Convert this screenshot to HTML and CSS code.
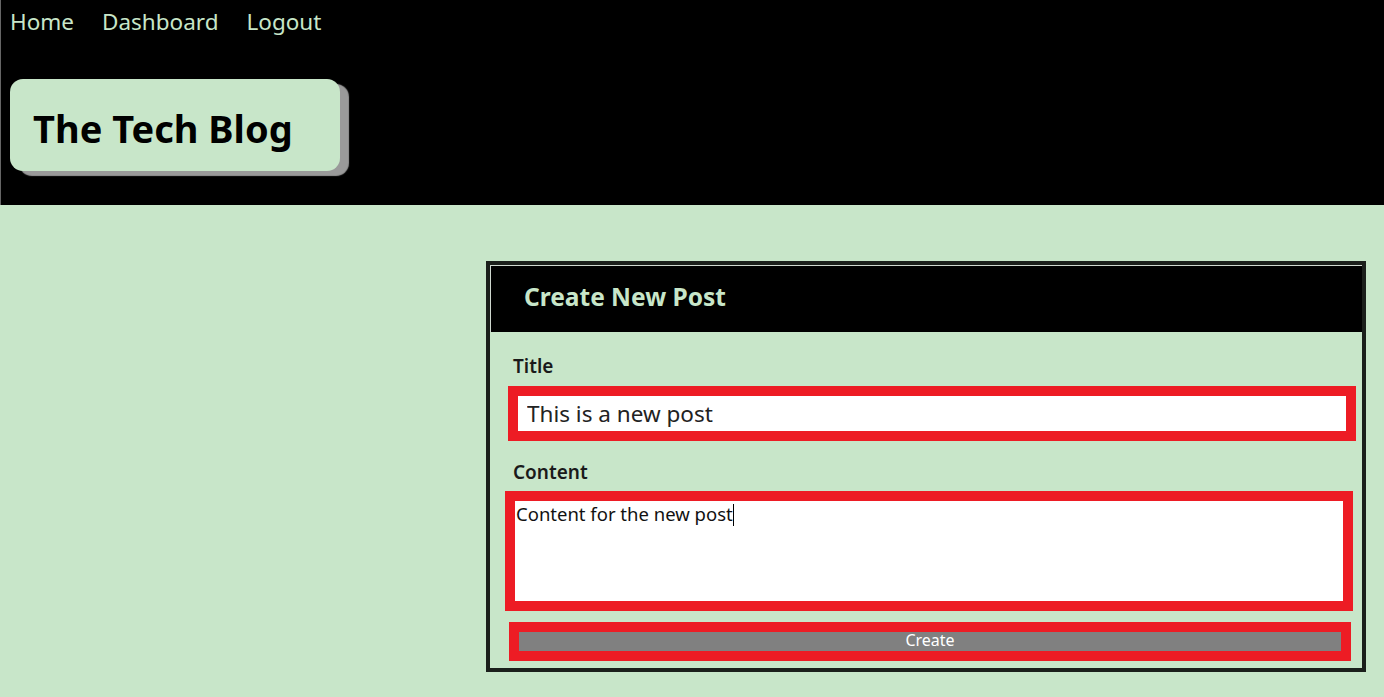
FILE: index.html
```html
<!DOCTYPE html>
<html lang="en">
<head>
<meta charset="utf-8">
<title>The Tech Blog</title>
<link rel="stylesheet" href="styles.css">
</head>
<body>
<header class="site-header">
  <nav class="nav">
    <a href="#" class="nav-link">Home</a>
    <a href="#" class="nav-link">Dashboard</a>
    <a href="#" class="nav-link">Logout</a>
  </nav>
  <div class="brand">
    <h1 class="brand-title">The Tech Blog</h1>
  </div>
</header>
<main class="main">
  <section class="card">
    <div class="card-header">
      <h2 class="card-title">Create New Post</h2>
    </div>
    <form class="card-body">
      <label class="field-label" for="title">Title</label>
      <div class="field field-title">
        <input id="title" class="text-input" type="text" value="This is a new post">
      </div>
      <label class="field-label label-content" for="content">Content</label>
      <div class="field field-content">
        <div class="text-area" id="content">Content for the new post<span class="caret"></span></div>
      </div>
      <div class="field field-button">
        <button type="button" class="btn">Create</button>
      </div>
    </form>
  </section>
</main>
</body>
</html>
```

FILE: styles.css
```css
html, body {
  margin: 0;
  padding: 0;
}
body {
  background: #c8e6c9;
  font-family: "Noto Sans", "Open Sans", sans-serif;
  min-height: 697px;
}
.site-header {
  background: #000;
  height: 205px;
  border-left: 1px solid #666;
  box-sizing: border-box;
  overflow: hidden;
}
.nav {
  display: flex;
  gap: 28px;
  padding-left: 9px;
  height: 44px;
  align-items: center;
}
.nav-link {
  color: #c8e6c9;
  text-decoration: none;
  font-size: 22.5px;
  line-height: 44px;
}
.brand {
  margin: 35px 0 0 9px;
  width: 330px;
  height: 92px;
  background: #c8e6c9;
  border-radius: 13px;
  box-shadow: 9px 5px 1px #9a9a9a;
  display: flex;
  align-items: center;
}
.brand-title {
  margin: 5px 0 0 23px;
  font-size: 38px;
  font-weight: 700;
  color: #000;
  line-height: 1;
}
.main {
  display: flex;
  justify-content: flex-end;
  padding: 56px 18px 0 0;
}
.card {
  width: 880px;
  box-sizing: border-box;
  border: 4px solid #1b1f1b;
}
.card-header {
  background: #000;
  height: 67px;
  border: 1px solid #cfd8cf;
  border-right: none;
  border-bottom: none;
  box-sizing: border-box;
  display: flex;
  align-items: center;
  padding: 0 0 5px 33px;
}
.card-title {
  margin: 0;
  font-size: 24.5px;
  font-weight: 700;
  color: #c8e6c9;
}
.card-body {
  display: flex;
  flex-direction: column;
  padding: 20px 0 7px 0;
}
.field-label {
  display: block;
  margin-left: 23px;
  font-size: 19px;
  font-weight: 600;
  color: #1a1a1a;
  line-height: 28px;
}
.label-content {
  margin-top: 17px;
}
.field {
  box-sizing: border-box;
  border: 10px solid #ed1c24;
}
.field-title {
  margin: 6px 0 0 18px;
  width: 848px;
  height: 55px;
}
.text-input {
  display: block;
  width: 100%;
  height: 100%;
  box-sizing: border-box;
  border: none;
  outline: none;
  padding: 0 0 0 9px;
  font-family: inherit;
  font-size: 22.5px;
  color: #222;
  background: #fff;
}
.field-content {
  margin: 5px 0 0 15px;
  width: 848px;
  height: 120px;
}
.text-area {
  background: #fff;
  height: 100%;
  box-sizing: border-box;
  padding: 0 0 0 1px;
  font-size: 18.5px;
  line-height: 26px;
  color: #111;
}
.caret {
  display: inline-block;
  width: 1px;
  height: 22px;
  background: #000;
  vertical-align: -5px;
}
.field-button {
  margin: 11px 0 0 19px;
  width: 842px;
  height: 39px;
}
.btn {
  display: block;
  width: 100%;
  height: 100%;
  border: none;
  background: #808080;
  color: #fff;
  font-family: inherit;
  font-size: 16px;
  line-height: 17px;
  padding: 0 0 2px;
}
```
